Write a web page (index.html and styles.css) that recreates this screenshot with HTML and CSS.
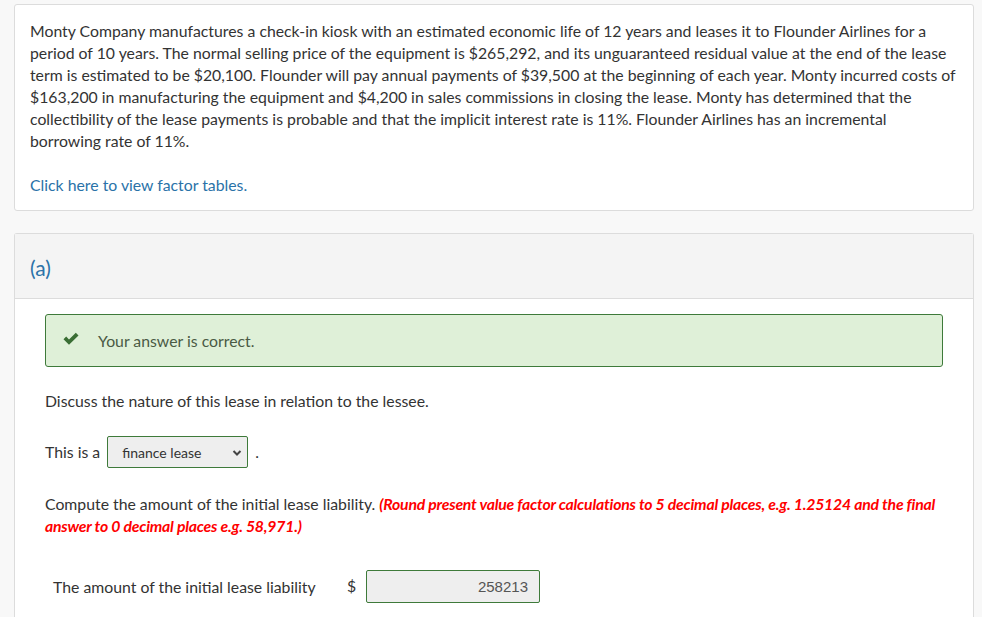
FILE: index.html
```html
<!DOCTYPE html>
<html>
<head>
<meta charset="utf-8">
<link rel="stylesheet" href="styles.css">
</head>
<body>
<div class="page">
  <div class="card intro">
    <p class="para">Monty Company manufactures a check-in kiosk with an estimated economic life of 12 years and leases it to Flounder Airlines for a period of 10 years. The normal selling price of the equipment is $265,292, and its unguaranteed residual value at the end of the lease term is estimated to be $20,100. Flounder will pay annual payments of $39,500 at the beginning of each year. Monty incurred costs of $163,200 in manufacturing the equipment and $4,200 in sales commissions in closing the lease. Monty has determined that the collectibility of the lease payments is probable and that the implicit interest rate is 11%. Flounder Airlines has an incremental borrowing rate of 11%.</p>
    <p class="para"><a class="link" href="#">Click here to view factor tables.</a></p>
  </div>

  <div class="card part">
    <div class="part-head">(a)</div>
    <div class="part-body">
      <div class="alert">
        <svg class="check" width="18" height="14" viewBox="0 0 18 14"><path d="M1.5 7.2 L4.2 4.6 L7 7.4 L13.8 0.8 L16.5 3.5 L7 12.8 Z" fill="#3a6e34"/></svg>
        <span>Your answer is correct.</span>
      </div>
      <p class="q">Discuss the nature of this lease in relation to the lessee.</p>
      <div class="sel-row">
        <span>This is a</span>
        <div class="select">
          <span class="sel-text">finance lease</span>
          <svg class="chev" width="10" height="8" viewBox="0 0 10 8"><path d="M1.5 2 L5 5.5 L8.5 2" fill="none" stroke="#444" stroke-width="2"/></svg>
        </div>
        <span class="dot">.</span>
      </div>
      <p class="q compute">Compute the amount of the initial lease liability. <em class="warn">(Round present value factor calculations to 5 decimal places, e.g. 1.25124 and the final answer to 0 decimal places e.g. 58,971.)</em></p>
      <div class="amount-row">
        <span class="amount-label">The amount of the initial lease liability</span>
        <span class="dollar">$</span>
        <div class="input">258213</div>
      </div>
    </div>
  </div>
</div>
</body>
</html>
```

FILE: styles.css
```css
* { box-sizing: border-box; }
html, body { margin: 0; padding: 0; }
body {
  background: #f8f8f8;
  font-family: Lato, "Open Sans", sans-serif;
  font-size: 15.8px;
  line-height: 22px;
  color: #333;
  height: 617px;
  overflow: hidden;
}
.page {
  padding: 4px 8px 0 14px;
}
.card {
  width: 960px;
  background: #fff;
  border: 1px solid #dcdcdc;
  border-radius: 3px;
}
.intro {
  padding: 15px 15px 14px;
}
.para { margin: 0; }
.para + .para { margin-top: 22px; }
.link { color: #2a72a8; text-decoration: none; }

.part { margin-top: 22px; border-bottom: none; border-radius: 3px 3px 0 0; }
.part-head {
  background: #f4f4f4;
  height: 65px;
  border-bottom: 1px solid #dcdcdc;
  padding: 3px 15px 0;
  display: flex;
  align-items: center;
  font-size: 21px;
  color: #2a72a8;
}
.part-body {
  padding: 15px 30px 60px 30px;
}
.alert {
  height: 53px;
  background: #dff0d8;
  border: 1px solid #3e7a3a;
  border-radius: 3px;
  display: flex;
  align-items: center;
  padding-left: 16px;
  color: #4a5a44;
}
.alert .check { margin-right: 18px; margin-top: -4px; }
.q { margin: 23px 0 0; }
.sel-row {
  margin-top: 24px;
  display: flex;
  align-items: center;
  height: 32px;
}
.select {
  margin-left: 7px;
  width: 141px;
  height: 32px;
  background: #eeeeee;
  border: 1px solid #3e7a3a;
  border-radius: 2px;
  display: flex;
  align-items: center;
  justify-content: space-between;
  padding: 2px 5px 0 14px;
  font-size: 14px;
  color: #333;
}
.chev { margin-top: -1px; }
.dot { margin-left: 7px; }
.compute { margin-top: 25px; }
.warn {
  color: #ff0000;
  font-weight: bold;
  font-style: italic;
  letter-spacing: -0.22px;
}
.amount-row {
  margin-top: 33px;
  display: flex;
  align-items: center;
  padding-left: 8px;
}
.amount-label { width: 294px; }
.dollar { width: 19px; margin-top: -2px; }
.input {
  width: 174px;
  height: 33px;
  background: #eeeeee;
  border: 1px solid #3e7a3a;
  border-radius: 2px;
  font-family: "Liberation Sans", Arial, sans-serif;
  font-size: 15px;
  color: #555;
  text-align: right;
  padding-right: 11px;
  line-height: 31px;
}
```
